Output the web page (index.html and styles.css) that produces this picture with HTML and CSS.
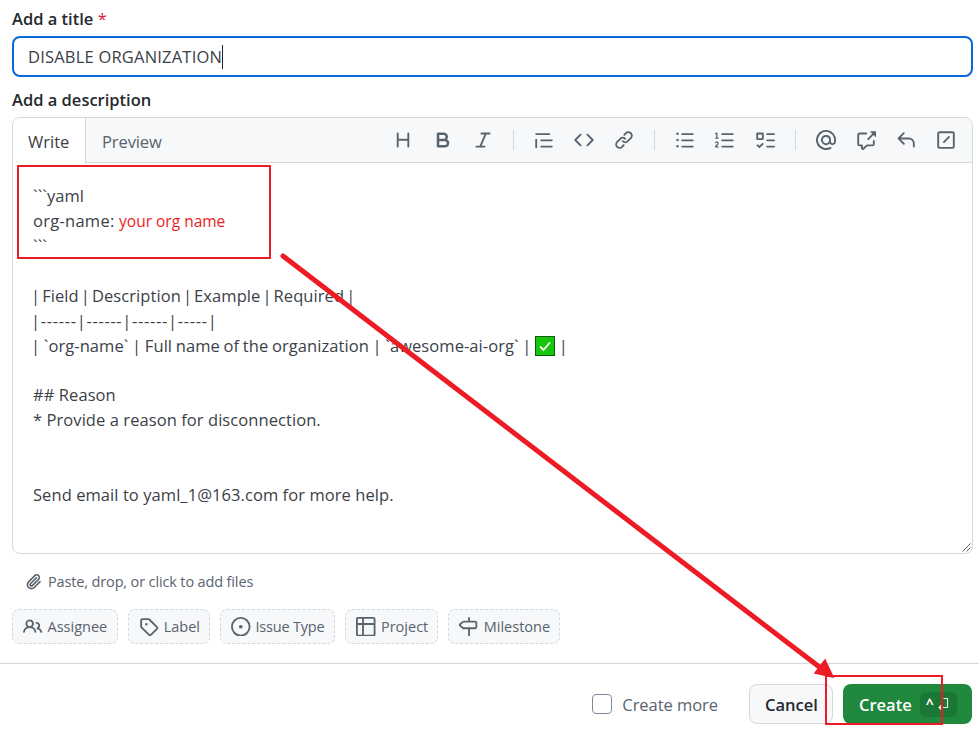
FILE: index.html
```html
<!DOCTYPE html>
<html lang="en">
<head>
<meta charset="utf-8">
<title>New issue</title>
<link rel="stylesheet" href="styles.css">
</head>
<body>
<form class="form">
  <div class="fields">
    <label class="label label-title">Add a title <span class="req">*</span></label>
    <div class="title-input"><span class="title-text">DISABLE ORGANIZATION</span><span class="caret"></span></div>
    <label class="label label-desc">Add a description</label>
    <div class="editor">
      <div class="editor-head">
        <div class="tabs">
          <span class="tab tab-active">Write</span>
          <span class="tab tab-preview">Preview</span>
        </div>
        <div class="toolbar">
          <svg class="ti" viewBox="0 0 16 16"><path d="M3.75 2a.75.75 0 0 1 .75.75V7h7V2.75a.75.75 0 0 1 1.5 0v10.5a.75.75 0 0 1-1.5 0V8.5h-7v4.75a.75.75 0 0 1-1.5 0V2.75A.75.75 0 0 1 3.75 2Z"/></svg>
          <svg class="ti" viewBox="0 0 16 16"><path d="M4 2h4.5a3.501 3.501 0 0 1 2.852 5.53A3.499 3.499 0 0 1 9.5 14H4a1 1 0 0 1-1-1V3a1 1 0 0 1 1-1Zm1 7v3h4.5a1.5 1.5 0 0 0 0-3Zm3.5-2a1.5 1.5 0 0 0 0-3H5v3Z"/></svg>
          <svg class="ti" viewBox="0 0 16 16"><path d="M6 2.75A.75.75 0 0 1 6.75 2h6.5a.75.75 0 0 1 0 1.5h-2.505l-3.858 9H9.25a.75.75 0 0 1 0 1.5h-6.5a.75.75 0 0 1 0-1.5h2.505l3.858-9H6.75A.75.75 0 0 1 6 2.75Z"/></svg>
          <span class="sep"></span>
          <svg class="ti" viewBox="0 0 16 16"><path d="M1.75 2.5h10.5a.75.75 0 0 1 0 1.5H1.75a.75.75 0 0 1 0-1.5Zm4 5h8.5a.75.75 0 0 1 0 1.5h-8.5a.75.75 0 0 1 0-1.5Zm0 5h8.5a.75.75 0 0 1 0 1.5h-8.5a.75.75 0 0 1 0-1.5ZM2.5 7.75v6a.75.75 0 0 1-1.5 0v-6a.75.75 0 0 1 1.5 0Z"/></svg>
          <svg class="ti" viewBox="0 0 16 16"><path d="m11.28 3.22 4.25 4.25a.75.75 0 0 1 0 1.06l-4.25 4.25a.749.749 0 0 1-1.275-.326.749.749 0 0 1 .215-.734L13.94 8l-3.72-3.72a.749.749 0 0 1 .326-1.275.749.749 0 0 1 .734.215Zm-6.56 0a.751.751 0 0 1 1.042.018.751.751 0 0 1 .018 1.042L2.06 8l3.72 3.72a.749.749 0 0 1-.326 1.275.749.749 0 0 1-.734-.215L.47 8.53a.75.75 0 0 1 0-1.06Z"/></svg>
          <svg class="ti" viewBox="0 0 16 16"><path d="m7.775 3.275 1.25-1.25a3.5 3.5 0 1 1 4.95 4.95l-2.5 2.5a3.5 3.5 0 0 1-4.95 0 .751.751 0 0 1 .018-1.042.751.751 0 0 1 1.042-.018 1.998 1.998 0 0 0 2.83 0l2.5-2.5a2.002 2.002 0 0 0-2.83-2.83l-1.25 1.25a.751.751 0 0 1-1.042-.018.751.751 0 0 1-.018-1.042Zm-4.69 9.64a1.998 1.998 0 0 0 2.83 0l1.25-1.25a.751.751 0 0 1 1.042.018.751.751 0 0 1 .018 1.042l-1.25 1.25a3.5 3.5 0 1 1-4.95-4.95l2.5-2.5a3.5 3.5 0 0 1 4.95 0 .751.751 0 0 1-.018 1.042.751.751 0 0 1-1.042.018 1.998 1.998 0 0 0-2.83 0l-2.5 2.5a1.998 1.998 0 0 0 0 2.83Z"/></svg>
          <span class="sep"></span>
          <svg class="ti" viewBox="0 0 16 16"><path d="M5.75 2.5h8.5a.75.75 0 0 1 0 1.5h-8.5a.75.75 0 0 1 0-1.5Zm0 5h8.5a.75.75 0 0 1 0 1.5h-8.5a.75.75 0 0 1 0-1.5Zm0 5h8.5a.75.75 0 0 1 0 1.5h-8.5a.75.75 0 0 1 0-1.5ZM2 14a1 1 0 1 1 0-2 1 1 0 0 1 0 2Zm1-6a1 1 0 1 1-2 0 1 1 0 0 1 2 0ZM2 4a1 1 0 1 1 0-2 1 1 0 0 1 0 2Z"/></svg>
          <svg class="ti" viewBox="0 0 16 16"><path d="M5 3.25a.75.75 0 0 1 .75-.75h8.5a.75.75 0 0 1 0 1.5h-8.5A.75.75 0 0 1 5 3.25Zm0 5a.75.75 0 0 1 .75-.75h8.5a.75.75 0 0 1 0 1.5h-8.5A.75.75 0 0 1 5 8.25Zm0 5a.75.75 0 0 1 .75-.75h8.5a.75.75 0 0 1 0 1.5h-8.5a.75.75 0 0 1-.75-.75ZM.924 10.32a.5.5 0 0 1-.851-.525l.001-.001.001-.002.002-.004.007-.011c.097-.144.215-.273.348-.384.228-.19.588-.392 1.068-.392.468 0 .858.181 1.126.484.259.294.377.673.377 1.038 0 .987-.686 1.495-1.156 1.845l-.047.035c-.303.225-.522.4-.654.597h1.357a.5.5 0 0 1 0 1H.5a.5.5 0 0 1-.5-.5c0-1.005.692-1.52 1.167-1.875l.035-.025c.531-.396.8-.625.8-1.078a.57.57 0 0 0-.128-.376C1.806 10.068 1.695 10 1.5 10a.658.658 0 0 0-.429.163.835.835 0 0 0-.144.153ZM2.003 2.5V6h.503a.5.5 0 0 1 0 1H.5a.5.5 0 0 1 0-1h.503V3.308l-.28.14a.5.5 0 0 1-.446-.895l1.003-.5a.5.5 0 0 1 .723.447Z"/></svg>
          <svg class="ti" viewBox="0 0 16 16"><path d="M2 2h4a1 1 0 0 1 1 1v4a1 1 0 0 1-1 1H2a1 1 0 0 1-1-1V3a1 1 0 0 1 1-1Zm4.655 8.595a.75.75 0 0 1 0 1.06L4.03 14.28a.75.75 0 0 1-1.06 0l-1.5-1.5a.749.749 0 0 1 .326-1.275.749.749 0 0 1 .734.215l.97.97 2.095-2.095a.75.75 0 0 1 1.06 0ZM9.75 2.5h5.5a.75.75 0 0 1 0 1.5h-5.5a.75.75 0 0 1 0-1.5Zm0 5h5.5a.75.75 0 0 1 0 1.5h-5.5a.75.75 0 0 1 0-1.5Zm0 5h5.5a.75.75 0 0 1 0 1.5h-5.5a.75.75 0 0 1 0-1.5Zm-7.25-9v3h3v-3Z"/></svg>
          <span class="sep"></span>
          <svg class="ti" viewBox="0 0 16 16"><path d="M4.75 2.37a6.501 6.501 0 0 0 6.5 11.26.75.75 0 0 1 .75 1.298A7.999 7.999 0 0 1 .989 4.148 8 8 0 0 1 16 7.75v1.5a2.75 2.75 0 0 1-5.072 1.475 3.999 3.999 0 0 1-6.65-4.19A4 4 0 0 1 12 8v1.25a1.25 1.25 0 0 0 2.5 0V7.867a6.5 6.5 0 0 0-9.75-5.496ZM10.5 8a2.5 2.5 0 1 0-5 0 2.5 2.5 0 0 0 5 0Z"/></svg>
          <svg class="ti" viewBox="0 0 16 16"><path d="M2.75 3.5a.25.25 0 0 0-.25.25v7.5c0 .138.112.25.25.25h2a.75.75 0 0 1 .75.75v2.19l2.72-2.72a.749.749 0 0 1 .53-.22h4.5a.25.25 0 0 0 .25-.25v-2.5a.75.75 0 0 1 1.5 0v2.5A1.75 1.75 0 0 1 13.25 13H9.06l-2.573 2.573A1.458 1.458 0 0 1 4 14.543V13H2.75A1.75 1.75 0 0 1 1 11.25v-7.5C1 2.784 1.784 2 2.75 2h5.5a.75.75 0 0 1 0 1.5ZM16 1.25v4.146a.25.25 0 0 1-.427.177L14.03 4.03l-3.75 3.75a.749.749 0 0 1-1.275-.326.749.749 0 0 1 .215-.734l3.75-3.75-1.543-1.543A.25.25 0 0 1 11.604 1h4.146a.25.25 0 0 1 .25.25Z"/></svg>
          <svg class="ti" viewBox="0 0 16 16"><path d="M6.78 1.97a.75.75 0 0 1 0 1.06L3.81 6h6.44A4.75 4.75 0 0 1 15 10.75v2.5a.75.75 0 0 1-1.5 0v-2.5a3.25 3.25 0 0 0-3.25-3.25H3.81l2.97 2.97a.749.749 0 0 1-.326 1.275.749.749 0 0 1-.734-.215L1.47 7.28a.75.75 0 0 1 0-1.06l4.25-4.25a.75.75 0 0 1 1.06 0Z"/></svg>
          <svg class="ti" viewBox="0 0 16 16"><path d="M1 2.75C1 1.784 1.784 1 2.75 1h10.5c.966 0 1.75.784 1.75 1.75v10.5A1.75 1.75 0 0 1 13.25 15H2.75A1.75 1.75 0 0 1 1 13.25Zm1.75-.25a.25.25 0 0 0-.25.25v10.5c0 .138.112.25.25.25h10.5a.25.25 0 0 0 .25-.25V2.75a.25.25 0 0 0-.25-.25Z"/><path d="M10.97 5.03a.75.75 0 0 1 0 1.06l-4.1 4.1a.75.75 0 0 1-1.06-1.06l4.1-4.1a.75.75 0 0 1 1.06 0Z"/></svg>
        </div>
      </div>
      <div class="editor-body">
        <div class="line">```yaml</div>
        <div class="line line-org">org-name: <span class="red-text">your org name</span></div>
        <div class="line">```</div>
        <div class="line"></div>
        <div class="line line-head">| Field | Description | Example | Required |</div>
        <div class="line line-dash">|------|------|------|-----|</div>
        <div class="line line-row">| `org-name` | Full name of the organization | `awesome-ai-org` | <svg class="check" viewBox="0 0 20 20"><rect x=".5" y=".5" width="19" height="19" fill="#16c60c" stroke="#0a5c06"/><path d="M5 10.5l3.5 3.5L15 6.5" fill="none" stroke="#fff" stroke-width="1.8"/></svg> |</div>
        <div class="line"></div>
        <div class="line">## Reason</div>
        <div class="line">* Provide a reason for disconnection.</div>
        <div class="line"></div>
        <div class="line"></div>
        <div class="line">Send email to yaml_1@163.com for more help.</div>
        <svg class="grip" viewBox="0 0 10 10"><path d="M9.5 1.5L1.5 9.5M9.5 5.5L5.5 9.5" stroke="#57606a" stroke-width="1" fill="none"/></svg>
      </div>
    </div>
    <div class="upload">
      <svg class="ui" viewBox="0 0 16 16"><path d="M12.212 3.02a1.753 1.753 0 0 0-2.478.003l-5.83 5.83a3.007 3.007 0 0 0-.88 2.127c0 .795.315 1.551.88 2.116.567.567 1.333.89 2.126.89.79 0 1.548-.321 2.116-.89l5.48-5.48a.75.75 0 0 1 1.061 1.06l-5.48 5.48a4.492 4.492 0 0 1-3.177 1.33c-1.2 0-2.345-.487-3.187-1.33a4.483 4.483 0 0 1-1.32-3.177c0-1.195.475-2.341 1.32-3.186l5.83-5.83a3.25 3.25 0 0 1 5.553 2.297c0 .863-.343 1.691-.953 2.301L7.439 12.39c-.375.377-.884.59-1.416.593a1.998 1.998 0 0 1-1.412-.593 1.992 1.992 0 0 1 0-2.828l5.48-5.48a.751.751 0 0 1 1.042.018.751.751 0 0 1 .018 1.042l-5.48 5.48a.492.492 0 0 0 0 .707.499.499 0 0 0 .354.147.495.495 0 0 0 .354-.147l5.833-5.827a1.755 1.755 0 0 0 0-2.481Z"/></svg>
      <span>Paste, drop, or click to add files</span>
    </div>
    <div class="chips">
      <span class="chip"><svg class="ci" viewBox="0 0 16 16"><path d="M2 5.5a3.5 3.5 0 1 1 5.898 2.549 5.508 5.508 0 0 1 3.034 4.084.75.75 0 1 1-1.482.235 4 4 0 0 0-7.9 0 .75.75 0 0 1-1.482-.236A5.507 5.507 0 0 1 3.102 8.05 3.493 3.493 0 0 1 2 5.5ZM11 4a3.001 3.001 0 0 1 2.22 5.018 5.01 5.01 0 0 1 2.56 3.012.749.749 0 0 1-.885.954.752.752 0 0 1-.549-.514 3.507 3.507 0 0 0-2.522-2.372.75.75 0 0 1-.574-.73v-.352a.75.75 0 0 1 .416-.672A1.5 1.5 0 0 0 11 5.5.75.75 0 0 1 11 4Zm-5.5-.5a2 2 0 1 0-.001 3.999A2 2 0 0 0 5.5 3.5Z"/></svg>Assignee</span>
      <span class="chip chip-tight"><svg class="ci" viewBox="0 0 16 16"><path d="M1 7.775V2.75C1 1.784 1.784 1 2.75 1h5.025c.464 0 .91.184 1.238.513l6.25 6.25a1.75 1.75 0 0 1 0 2.474l-5.026 5.026a1.75 1.75 0 0 1-2.474 0l-6.25-6.25A1.752 1.752 0 0 1 1 7.775Zm1.5 0c0 .066.026.13.073.177l6.25 6.25a.25.25 0 0 0 .354 0l5.025-5.025a.25.25 0 0 0 0-.354l-6.25-6.25a.25.25 0 0 0-.177-.073H2.75a.25.25 0 0 0-.25.25ZM6 5a1 1 0 1 1 0 2 1 1 0 0 1 0-2Z"/></svg>Label</span>
      <span class="chip chip-type"><svg class="ci" viewBox="0 0 16 16"><path d="M8 9.5a1.5 1.5 0 1 0 0-3 1.5 1.5 0 0 0 0 3Z"/><path d="M8 0a8 8 0 1 1 0 16A8 8 0 0 1 8 0ZM1.5 8a6.5 6.5 0 1 0 13 0 6.5 6.5 0 0 0-13 0Z"/></svg>Issue Type</span>
      <span class="chip chip-tight"><svg class="ci" viewBox="0 0 16 16"><path d="M0 1.75C0 .784.784 0 1.750 0h12.5C15.216 0 16 .784 16 1.75v12.5A1.75 1.75 0 0 1 14.25 16H1.75A1.75 1.75 0 0 1 0 14.25ZM6.5 6.5v8h7.75a.25.25 0 0 0 .25-.25V6.5Zm8-1.5V1.75a.25.25 0 0 0-.25-.25H6.5V5Zm-13 1.5v7.75c0 .138.112.25.25.25H5v-8ZM5 5V1.5H1.75a.25.25 0 0 0-.25.25V5Z"/></svg>Project</span>
      <span class="chip chip-tight"><svg class="ci ci-flip" viewBox="0 0 16 16"><path d="M7.75 0a.75.75 0 0 1 .75.75V3h3.634c.414 0 .814.147 1.13.414l2.07 1.75a1.75 1.75 0 0 1 0 2.672l-2.07 1.75a1.75 1.75 0 0 1-1.13.414H8.5v5.25a.75.75 0 0 1-1.5 0V10H2.75A1.75 1.75 0 0 1 1 8.25v-3.5C1 3.784 1.784 3 2.75 3H7V.75A.75.75 0 0 1 7.75 0Zm4.384 8.5a.25.25 0 0 0 .161-.06l2.07-1.75a.248.248 0 0 0 0-.38l-2.07-1.75a.25.25 0 0 0-.161-.06H2.75a.25.25 0 0 0-.25.25v3.5c0 .138.112.25.25.25h9.384Z"/></svg>Milestone</span>
    </div>
  </div>
  <div class="footer">
    <span class="create-more"><span class="checkbox"></span>Create more</span>
    <span class="btn btn-cancel">Cancel</span>
    <span class="btn btn-create">Create<span class="kbd"><span class="kbd-ctrl">^</span><svg class="kbd-enter" viewBox="0 0 12 14"><path d="M6.5 1.5h4v9H2M4.5 8l-2.5 2.500 2.500 2.500" fill="none" stroke="#e8f3eb" stroke-width="1.100"/></svg></span></span>
  </div>
</form>
<div class="mark mark-a"></div>
<div class="mark mark-b"></div>
<svg class="arrow" viewBox="0 0 979 732"><path d="M283 256L822 669" stroke="#ed1c24" stroke-width="5" stroke-linecap="round" fill="none"/><path d="M833 677L815 673L825 660Z" fill="#ed1c24" stroke="#ed1c24" stroke-width="1.5"/></svg>
</body>
</html>
```
FILE: styles.css
```css
* { box-sizing: border-box; }
html, body { margin: 0; padding: 0; }
body {
  width: 979px;
  height: 732px;
  overflow: hidden;
  position: relative;
  background: #fff;
  color: #1f2328;
  font-family: "Open Sans", "Noto Sans", sans-serif;
  font-size: 16.5px;
}
.form { display: flex; flex-direction: column; }
.fields { padding: 8px 6px 0 12px; display: flex; flex-direction: column; }
.label { font-size: 16.5px; line-height: 22px; font-weight: 600; letter-spacing: 0; color: #25292e; }
.req { color: #d1242f; font-weight: 400; }
.title-input {
  margin-top: 6px;
  height: 41px;
  border: 2px solid #0969da;
  border-radius: 8px;
  padding-left: 14px;
  display: flex;
  align-items: center;
  letter-spacing: 0.2px;
  color: #3b4148;
}
.caret { width: 1px; height: 24px; background: #1f2328; }
.label-desc { margin-top: 12px; }
.editor {
  margin-top: 6px;
  height: 437px;
  border: 1px solid #d1d9e0;
  border-radius: 8px;
  display: flex;
  flex-direction: column;
  overflow: hidden;
}
.editor-head {
  height: 45px;
  flex: none;
  background: #f6f8fa;
  border-bottom: 1px solid #d1d9e0;
  display: flex;
  justify-content: space-between;
}
.tabs { display: flex; }
.tab {
  padding: 2px 15px 0;
  display: flex;
  align-items: center;
  color: #59636e;
  height: 45px;
}
.tab-active {
  background: #fff;
  color: #3b4148;
  border-right: 1px solid #d1d9e0;
  width: 73px;
}
.tab-preview { padding-left: 16px; letter-spacing: -0.1px; }
.toolbar { display: flex; align-items: center; padding-right: 6px; }
.ti { width: 20px; height: 20px; margin: 0 10px; fill: #59636e; display: block; flex: none; }
.sep { width: 1px; height: 20px; background: #d1d9e0; margin: 0 10px; }
.editor-body {
  flex: 1;
  padding: 21.2px 20px 0;
  position: relative;
  line-height: 24.9px;
  letter-spacing: 0.07px;
  color: #3b4148;
}
.line { height: 24.9px; white-space: pre; }
.line-org { letter-spacing: 0.27px; }
.line-head { margin-left: -2px; word-spacing: -2.3px; }
.line-dash { margin-left: -2px; letter-spacing: 0.68px; }
.line-row { margin-left: -2px; word-spacing: -0.7px; }
.red-text { color: #ed1c24; font-size: 15.5px; letter-spacing: 0; }
.check { width: 20px; height: 20px; vertical-align: -4px; }
.grip { position: absolute; right: 1px; bottom: 1px; width: 10px; height: 10px; }
.upload {
  margin-top: 17px;
  height: 20px;
  padding-left: 13px;
  display: flex;
  align-items: center;
  gap: 6px;
  font-size: 14.5px;
  letter-spacing: -0.14px;
  color: #59636e;
}
.ui { width: 17px; height: 17px; fill: #59636e; }
.chips { margin-top: 18px; display: flex; gap: 10px; }
.chip {
  height: 35px;
  padding: 0 10px;
  display: flex;
  align-items: center;
  gap: 5px;
  border: 1px dashed #d1d9e0;
  border-radius: 7px;
  background: #f6f8fa;
  font-size: 14.5px;
  color: #59636e;
}
.chip-tight { padding-right: 9px; }
.chip-type { letter-spacing: -0.2px; }
.ci { width: 19.5px; height: 19.5px; fill: #59636e; flex: none; }
.ci-flip { transform: scaleX(-1); }
.footer {
  margin-top: 19px;
  height: 69px;
  border-top: 1px solid #d1d9e0;
  display: flex;
  align-items: flex-start;
  justify-content: flex-end;
  padding: 20px 7px 0 0;
}
.create-more {
  display: flex;
  align-items: center;
  gap: 10px;
  height: 40px;
  margin-right: 31px;
  letter-spacing: -0.05px;
  color: #59636e;
}
.checkbox { width: 20px; height: 20px; border: 1px solid #818b98; border-radius: 4px; background: #fff; }
.btn {
  height: 40px;
  border-radius: 8px;
  display: flex;
  align-items: center;
  font-weight: 600;
}
.btn-cancel {
  padding: 0 15px;
  width: 84px;
  background: #f6f8fa;
  border: 1px solid #d1d9e0;
  color: #25292e;
  margin-right: 10px;
}
.btn-create {
  width: 129px;
  padding-left: 16px;
  background: #1f883d;
  color: #fff;
  gap: 8px;
}
.kbd {
  width: 37px;
  height: 25px;
  background: rgba(0,0,0,.12);
  border-radius: 6px;
  display: flex;
  align-items: center;
  padding-left: 6px;
  gap: 3px;
}
.kbd-ctrl { font-size: 14px; font-weight: 700; margin-top: -1px; }
.kbd-enter { width: 12px; height: 14px; }
.mark { position: absolute; border: 2px solid #ed1c24; }
.mark-a { left: 17px; top: 165px; width: 254px; height: 94px; }
.mark-b { left: 825px; top: 675px; width: 118px; height: 50px; }
.arrow { position: absolute; left: 0; top: 0; width: 979px; height: 732px; pointer-events: none; }
```
